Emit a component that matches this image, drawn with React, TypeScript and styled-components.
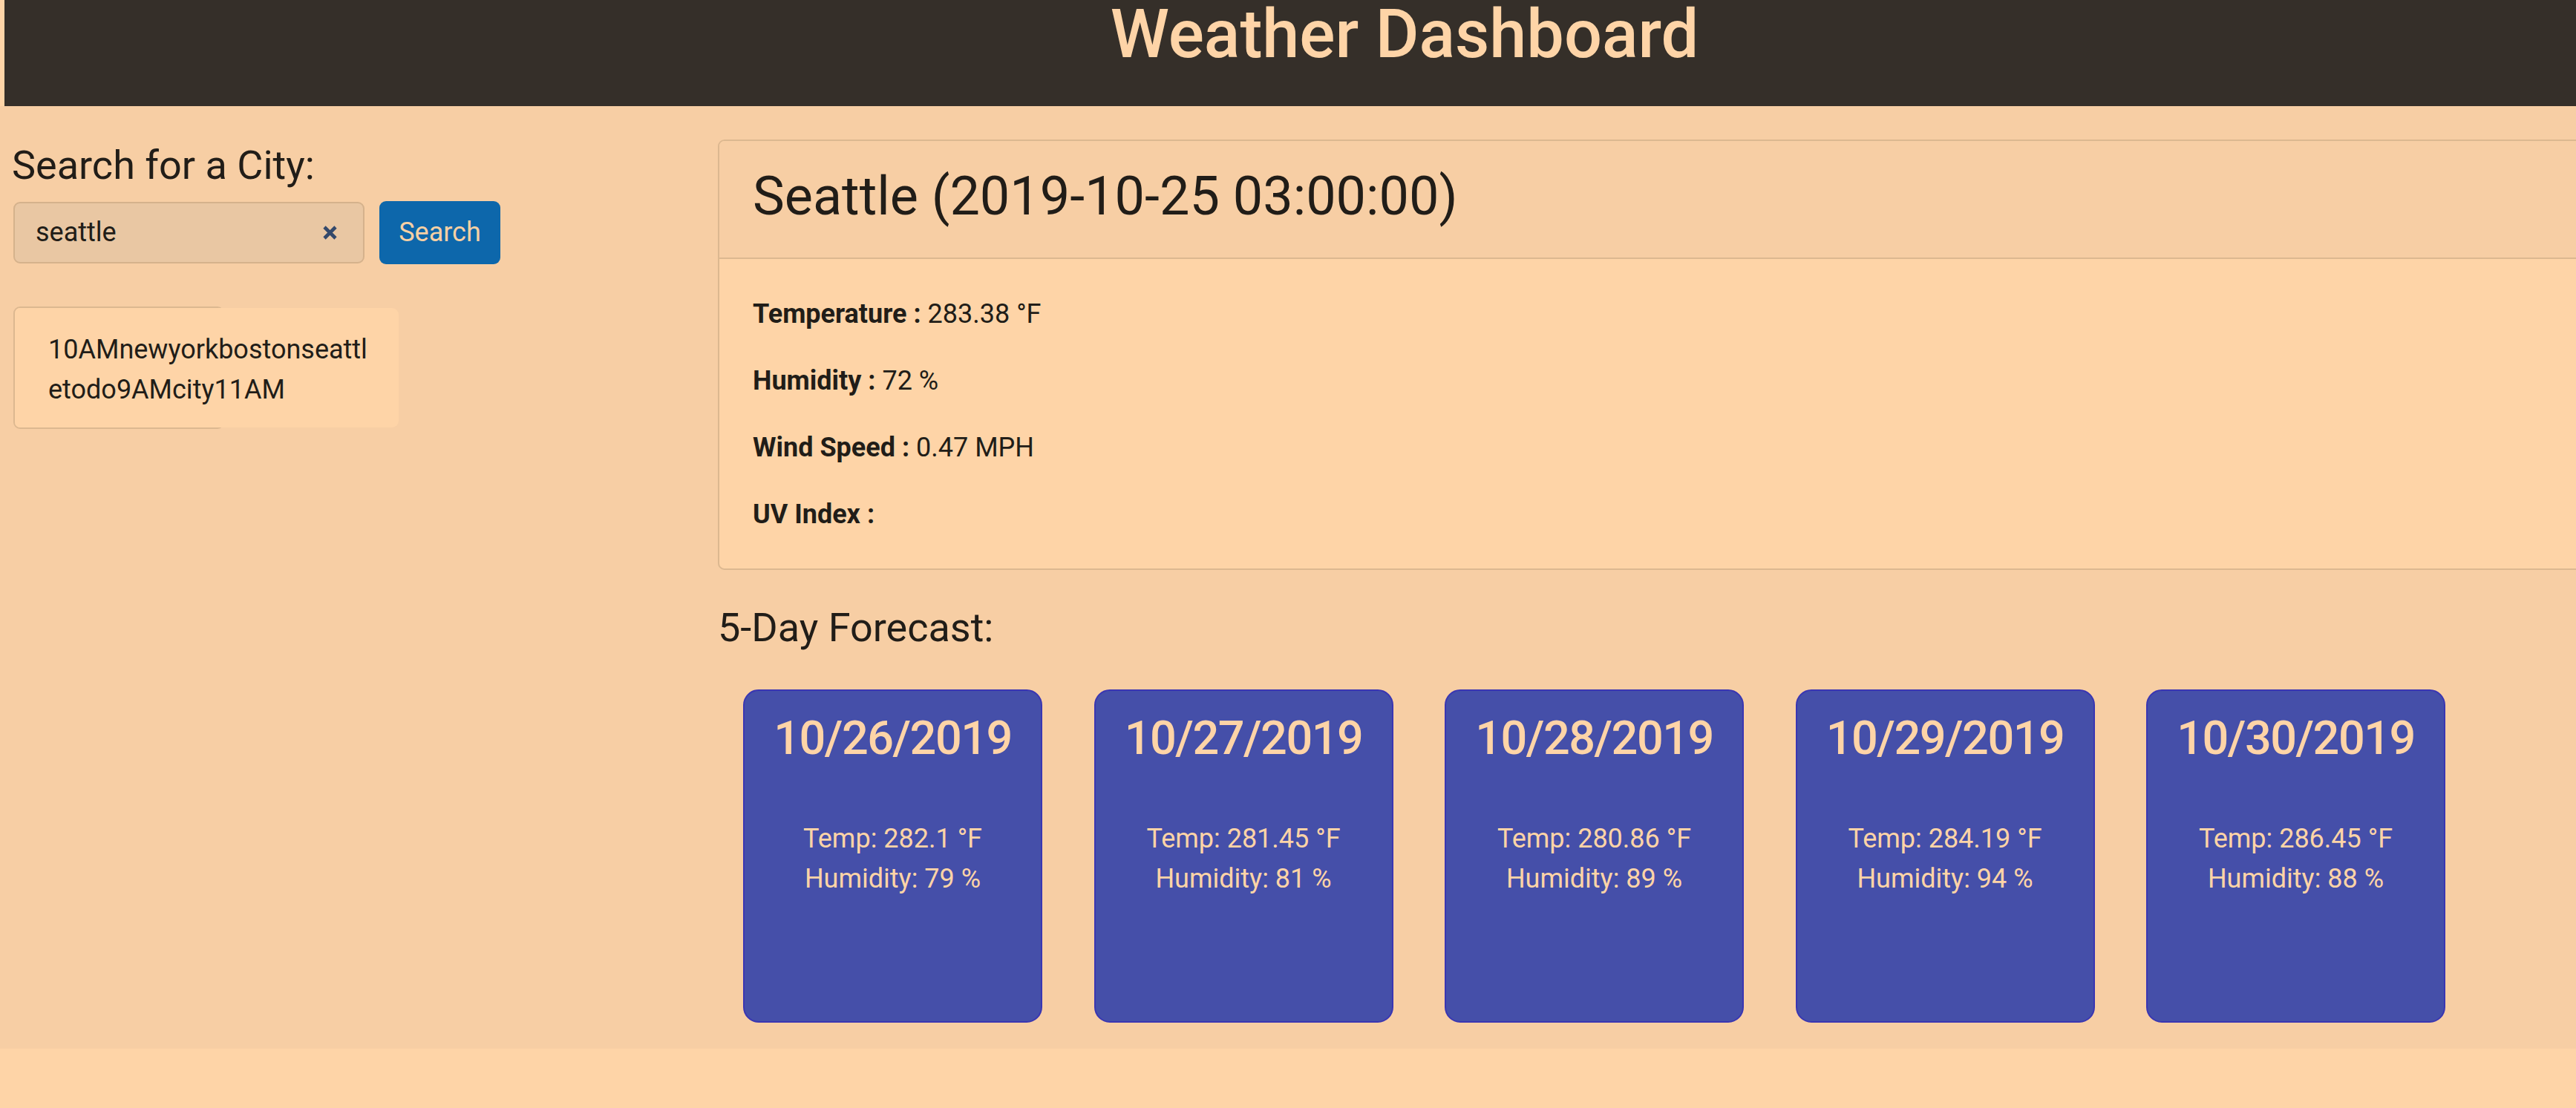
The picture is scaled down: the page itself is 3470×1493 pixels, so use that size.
import React from "react";
import styled, { createGlobalStyle } from "styled-components";

const GlobalStyle = createGlobalStyle`
  html, body {
    margin: 0;
    padding: 0;
    overflow: hidden;
    background: #fed4a7;
  }
  body {
    font-family: Roboto, "Open Sans", "Noto Sans", sans-serif;
    color: #211d18;
  }
  * { box-sizing: border-box; }
`;

const Header = styled.header`
  margin-left: 6px;
  width: 3772px;
  height: 143px;
  background: #352f29;
  display: flex;
  justify-content: center;
  align-items: flex-start;
  padding-top: 2px;
`;

const Title = styled.h1`
  margin: 0;
  font-size: 90px;
  line-height: 90px;
  font-weight: 500;
  color: #fed4a7;
`;

const Main = styled.main`
  width: 3772px;
  height: 1270px;
  background: #f7cea4;
  display: flex;
  align-items: flex-start;
  padding-top: 45px;
`;

const Sidebar = styled.aside`
  width: 934px;
  flex: none;
  padding-left: 16px;
  padding-top: 3px;
  display: flex;
  flex-direction: column;
`;

const SectionTitle = styled.h4`
  margin: 0;
  font-size: 54px;
  line-height: 64.8px;
  font-weight: 400;
  color: #211d18;
`;

const SearchRow = styled.form`
  margin-top: 15px;
  margin-left: 2px;
  display: flex;
  align-items: center;
  gap: 20px;
`;

const InputBox = styled.div`
  width: 473px;
  height: 83px;
  background: #e9c7a3;
  border: 2px solid #d5b28c;
  border-radius: 9px;
  display: flex;
  align-items: center;
  justify-content: space-between;
  padding: 0 34px 0 28px;
`;

const InputText = styled.span`
  font-size: 36px;
  color: #211d18;
`;

const ClearIcon = styled.svg`
  width: 21px;
  height: 21px;
  flex: none;
`;

const SearchButton = styled.button`
  width: 163px;
  height: 85px;
  background: #0d67ab;
  border: none;
  border-radius: 9px;
  color: #f7d0a4;
  font-family: inherit;
  font-size: 36px;
  padding: 0;
`;

const HistoryCard = styled.div`
  margin-top: 57px;
  margin-left: 2px;
  width: 284px;
  height: 165px;
  border: 2px solid #dcb890;
  border-radius: 9px;
  display: flex;
`;

const HistoryItem = styled.div`
  width: 517px;
  flex: none;
  background: #fed4a7;
  border-radius: 7px 9px 9px 7px;
  padding: 29px 30px 0 45px;
  font-size: 36px;
  line-height: 54px;
  word-break: break-all;
  color: #211d18;
`;

const Content = styled.section`
  flex: 1;
  padding-left: 33px;
  display: flex;
  flex-direction: column;
`;

const CurrentCard = styled.div`
  width: 2800px;
  border: 2px solid #dcb890;
  border-radius: 9px;
  background: #fed4a7;
  overflow: hidden;
`;

const CardHeader = styled.div`
  background: #f7cea4;
  border-bottom: 2px solid #dcb890;
  padding: 32px 45px 39px;
`;

const CityTitle = styled.h2`
  margin: 0;
  font-size: 72px;
  line-height: 86.4px;
  font-weight: 400;
  color: #211d18;
`;

const CardBody = styled.div`
  padding: 47px 45px 46px;
  display: flex;
  flex-direction: column;
  gap: 36px;
`;

const Stat = styled.p`
  margin: 0;
  font-size: 36px;
  line-height: 54px;
  color: #211d18;
`;

const Label = styled.strong`
  font-weight: 700;
`;

const ForecastTitle = styled(SectionTitle)`
  margin-top: 46px;
`;

const ForecastRow = styled.div`
  margin-top: 50px;
  margin-left: 34px;
  display: flex;
  gap: 69.5px;
`;

const DayCard = styled.div`
  width: 403px;
  height: 449px;
  flex: none;
  background: #454fa9;
  border: 2px solid #3a36b2;
  border-radius: 21px;
  padding-top: 26px;
  display: flex;
  flex-direction: column;
  align-items: center;
  color: #fed4a7;
`;

const DayDate = styled.h3`
  margin: 0 0 70px;
  font-size: 63px;
  line-height: 75.6px;
  font-weight: 500;
  letter-spacing: -1.5px;
  color: #fed4a7;
`;

const DayLine = styled.div`
  font-size: 36px;
  line-height: 54px;
`;

const stats = [
  { label: "Temperature", value: "283.38 °F" },
  { label: "Humidity", value: "72 %" },
  { label: "Wind Speed", value: "0.47 MPH" },
  { label: "UV Index", value: "" },
];

const forecast = [
  { date: "10/26/2019", temp: "282.1", hum: "79" },
  { date: "10/27/2019", temp: "281.45", hum: "81" },
  { date: "10/28/2019", temp: "280.86", hum: "89" },
  { date: "10/29/2019", temp: "284.19", hum: "94" },
  { date: "10/30/2019", temp: "286.45", hum: "88" },
];

export default function App() {
  return (
    <>
      <GlobalStyle />
      <Header>
        <Title>Weather Dashboard</Title>
      </Header>
      <Main>
        <Sidebar>
          <SectionTitle>Search for a City:</SectionTitle>
          <SearchRow onSubmit={(e) => e.preventDefault()}>
            <InputBox>
              <InputText>seattle</InputText>
              <ClearIcon viewBox="0 0 21 21">
                <path d="M3 3 L18 18 M18 3 L3 18" stroke="#34496b" strokeWidth="4.6" />
              </ClearIcon>
            </InputBox>
            <SearchButton type="submit">Search</SearchButton>
          </SearchRow>
          <HistoryCard>
            <HistoryItem>10AMnewyorkbostonseattletodo9AMcity11AM</HistoryItem>
          </HistoryCard>
        </Sidebar>
        <Content>
          <CurrentCard>
            <CardHeader>
              <CityTitle>Seattle (2019-10-25 03:00:00)</CityTitle>
            </CardHeader>
            <CardBody>
              {stats.map((s) => (
                <Stat key={s.label}>
                  <Label>{s.label} :</Label> {s.value}
                </Stat>
              ))}
            </CardBody>
          </CurrentCard>
          <ForecastTitle>5-Day Forecast:</ForecastTitle>
          <ForecastRow>
            {forecast.map((d) => (
              <DayCard key={d.date}>
                <DayDate>{d.date}</DayDate>
                <DayLine>Temp: {d.temp} °F</DayLine>
                <DayLine>Humidity: {d.hum} %</DayLine>
              </DayCard>
            ))}
          </ForecastRow>
        </Content>
      </Main>
    </>
  );
}
